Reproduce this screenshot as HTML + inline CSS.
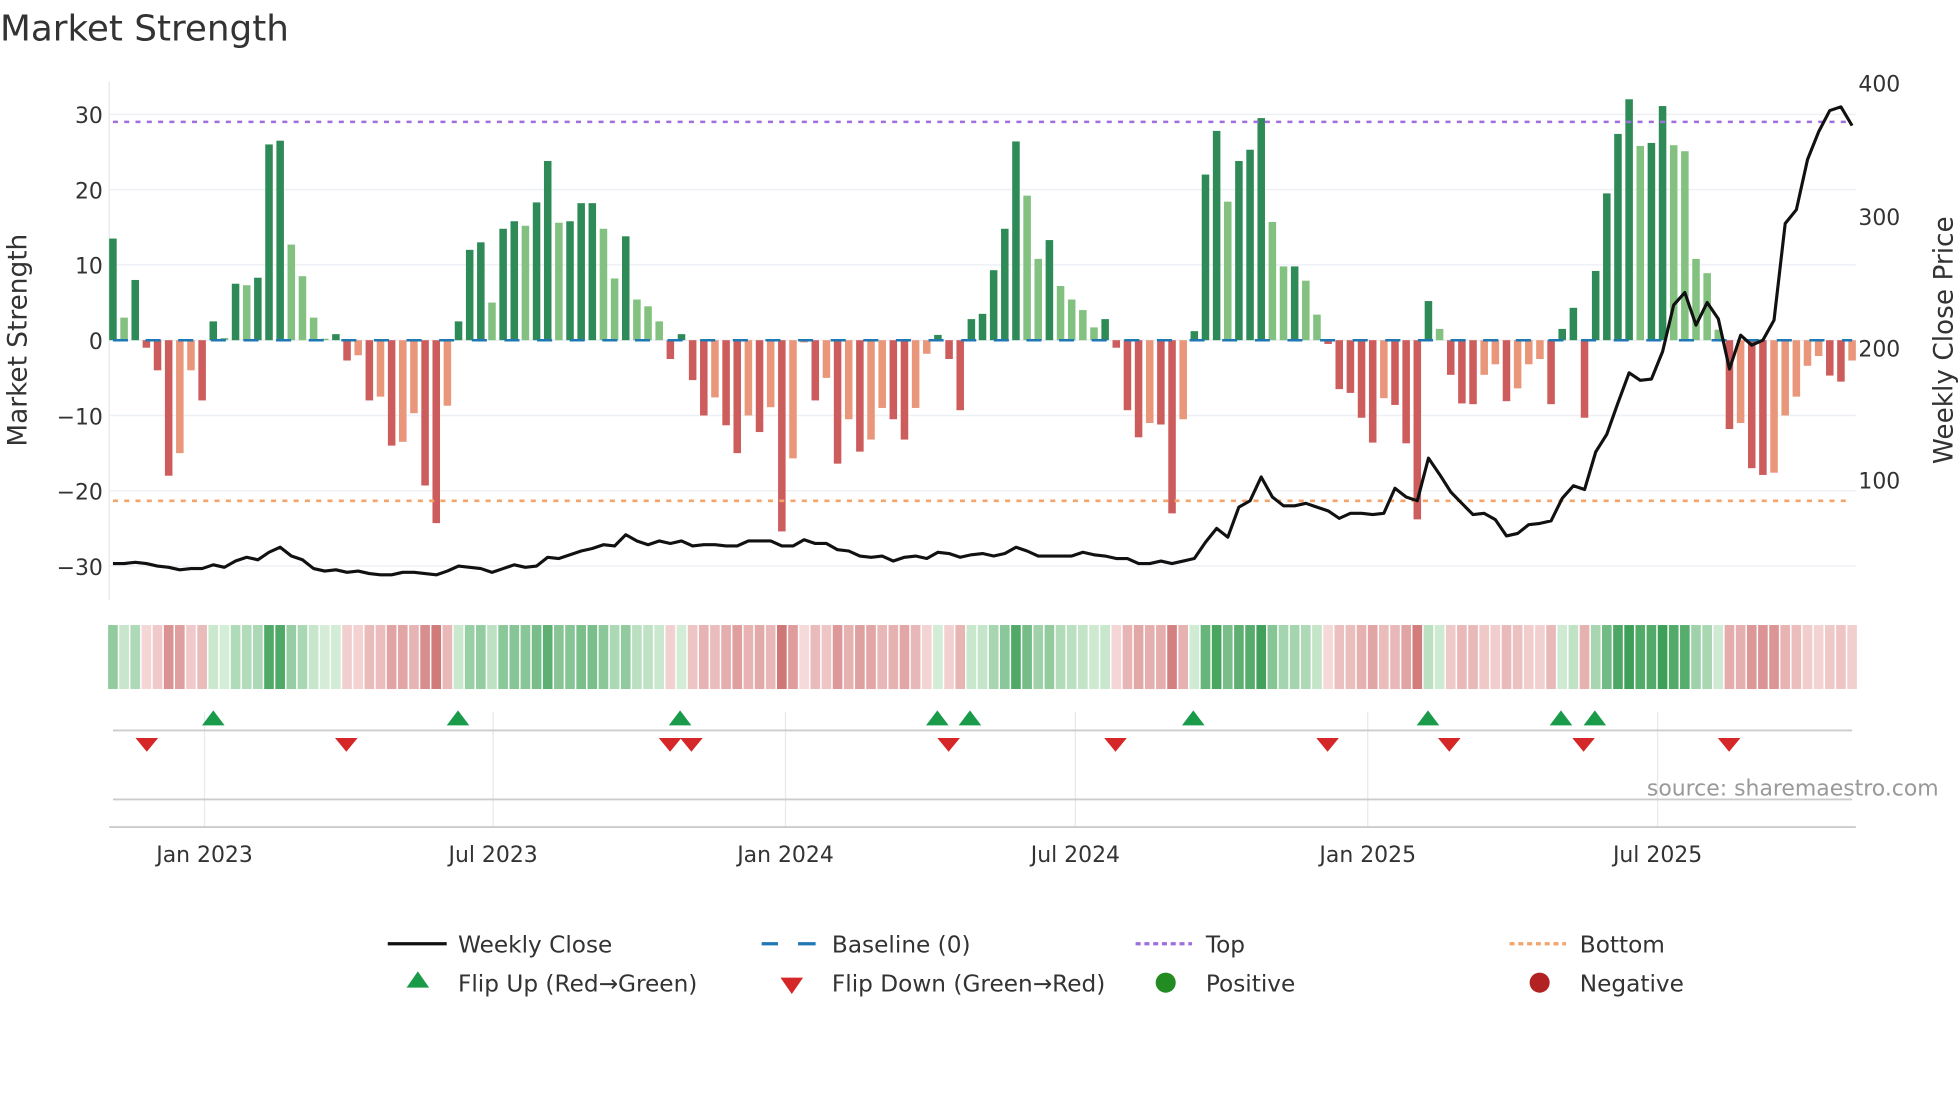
<!DOCTYPE html>
<html><head><meta charset="utf-8">
<style>
html,body{margin:0;padding:0;background:#fff;overflow:hidden}
svg{display:block}
text{font-family:"DejaVu Sans","Liberation Sans",sans-serif;fill:#333}
</style></head>
<body>
<svg id="s" xmlns="http://www.w3.org/2000/svg" width="1960" height="1102" viewBox="0 0 1562 878">
<text x="0" y="32" font-size="28.5">Market Strength</text>
<g id="grid"></g>
<g id="bars"></g>
<g id="fg"></g>
<text x="1545" y="634" font-size="17.5" text-anchor="end" style="fill:#999">source: sharemaestro.com</text>
<text transform="translate(21,271) rotate(-90)" font-size="21" text-anchor="middle">Market Strength</text>
<text transform="translate(1556,271) rotate(-90)" font-size="21" text-anchor="middle">Weekly Close Price</text>
<g font-size="17.5">
<text x="82" y="98" text-anchor="end">30</text>
<text x="82" y="158" text-anchor="end">20</text>
<text x="82" y="218" text-anchor="end">10</text>
<text x="82" y="278" text-anchor="end">0</text>
<text x="82" y="338" text-anchor="end">−10</text>
<text x="82" y="398" text-anchor="end">−20</text>
<text x="82" y="458" text-anchor="end">−30</text>
<text x="1481" y="73">400</text>
<text x="1481" y="179">300</text>
<text x="1481" y="284">200</text>
<text x="1481" y="389">100</text>
<text x="163" y="687" text-anchor="middle">Jan 2023</text>
<text x="393" y="687" text-anchor="middle">Jul 2023</text>
<text x="626" y="687" text-anchor="middle">Jan 2024</text>
<text x="857" y="687" text-anchor="middle">Jul 2024</text>
<text x="1090" y="687" text-anchor="middle">Jan 2025</text>
<text x="1321" y="687" text-anchor="middle">Jul 2025</text>
</g>
<g font-size="18.5">
<line x1="309" y1="752" x2="356" y2="752" stroke="#111" stroke-width="2.5"/>
<text x="365" y="759">Weekly Close</text>
<line x1="607" y1="752" x2="620" y2="752" stroke="#1f77b4" stroke-width="2.5"/>
<line x1="636" y1="752" x2="650" y2="752" stroke="#1f77b4" stroke-width="2.5"/>
<text x="663" y="759">Baseline (0)</text>
<line x1="905" y1="752" x2="950" y2="752" stroke="#9f6fe0" stroke-width="2.5" stroke-dasharray="4,3"/>
<text x="961" y="759">Top</text>
<line x1="1203" y1="752" x2="1248" y2="752" stroke="#f4a36a" stroke-width="2.5" stroke-dasharray="4,3"/>
<text x="1259" y="759">Bottom</text>
<polygon points="333,774 324,787 342,787" fill="#1a9b4a"/>
<text x="365" y="790">Flip Up (Red→Green)</text>
<polygon points="622,779 640,779 631,792" fill="#d62728"/>
<text x="663" y="790">Flip Down (Green→Red)</text>
<circle cx="929" cy="783" r="8" fill="#228b22"/>
<text x="961" y="790">Positive</text>
<circle cx="1227" cy="783" r="8" fill="#b22222"/>
<text x="1259" y="790">Negative</text>
</g>
</svg>
<script>
var NS="http://www.w3.org/2000/svg";
function el(p,t,a){var e=document.createElementNS(NS,t);for(var k in a)e.setAttribute(k,a[k]);p.appendChild(e);return e;}
var G=document.getElementById('grid'),B=document.getElementById('bars'),F=document.getElementById('fg');
for(var v=30;v>=-30;v-=10){var y=271-v*6;el(G,'line',{x1:87,x2:1479,y1:y,y2:y,stroke:'#edf0f5','stroke-width':1.2});}
el(G,'line',{x1:87,x2:87,y1:65,y2:478,stroke:'#e8ebf0','stroke-width':1.2});
[163,393,626,857,1090,1321].forEach(function(x){el(G,'line',{x1:x,x2:x,y1:567,y2:659,stroke:'#e6e9ef','stroke-width':1});});
el(G,'line',{x1:90,x2:1476,y1:582,y2:582,stroke:'#ccc','stroke-width':1.5});
el(G,'line',{x1:90,x2:1476,y1:637,y2:637,stroke:'#ccc','stroke-width':1.5});
el(G,'line',{x1:87,x2:1479,y1:659,y2:659,stroke:'#ccc','stroke-width':1.5});
var d="13.5D 3L 8D -1R -4R -18R -15O -4O -8R 2.5D 0.3L 7.5D 7.3L 8.3D 26D 26.5D 12.7L 8.5L 3L 0.2L 0.8D -2.7R -2O -8R -7.5O -14R -13.5O -9.7O -19.3R -24.3R -8.7O 2.5D 12D 13D 5L 14.8D 15.8D 15.2L 18.3D 23.8D 15.6L 15.8D 18.2D 18.2D 14.8L 8.2L 13.8D 5.4L 4.5L 2.5L -2.5R 0.8D -5.3R -10R -7.6O -11.3R -15R -10O -12.2R -8.9O -25.4R -15.7O -0.3O -8R -5O -16.4R -10.5O -14.8R -13.2O -9O -10.5R -13.2R -9O -1.8O 0.7D -2.5R -9.3R 2.8D 3.5D 9.3D 14.8D 26.4D 19.2L 10.8L 13.3D 7.2L 5.4L 4L 1.7L 2.8D -1R -9.3R -12.9R -11O -11.2R -23R -10.5O 1.2D 22D 27.8D 18.4L 23.8D 25.3D 29.5D 15.7L 9.8L 9.8D 7.9L 3.4L -0.5R -6.5R -7R -10.3R -13.6R -7.7O -8.6R -13.7R -23.8R 5.2D 1.5L -4.6R -8.4R -8.5R -4.6O -3.2O -8.1R -6.4O -3.2O -2.5O -8.5R 1.5D 4.3D -10.3R 9.2D 19.5D 27.4D 32D 25.8L 26.2D 31.1D 25.9L 25.1L 10.8L 8.9L 1.4L -11.8R -11O -17R -17.9R -17.6O -10O -7.5O -3.4O -2.1O -4.7R -5.5R -2.7O".split(' ');
var n=d.length,x0=90,x1=1476,st=(x1-x0)/(n-1);
var col={D:'#2e8b57',L:'#82c17f',R:'#cd5c5c',O:'#e9967a'};
function mix(a,b,t){return 'rgb('+[0,1,2].map(function(i){return Math.round(a[i]+(b[i]-a[i])*t)}).join(',')+')';}
d.forEach(function(s,i){
 var v=parseFloat(s),c=s.slice(-1),x=x0+i*st,y0=271,y=271-v*6;
 el(B,'rect',{x:x-3,y:Math.min(y,y0),width:6,height:Math.max(Math.abs(y-y0),0.8),fill:col[c]});
 var t=Math.min(Math.abs(v)/30,1);
 var f=v>=0?mix([214,238,216],[62,160,88],t):mix([246,218,218],[200,100,100],t);
 el(B,'rect',{x:x-st/2+0.6,y:498,width:st-1.2,height:51,fill:f});
});
el(F,'line',{x1:90,x2:1476,y1:271,y2:271,stroke:'#1f77b4','stroke-width':2,'stroke-dasharray':'12,14'});
el(F,'line',{x1:90,x2:1476,y1:97,y2:97,stroke:'#9f6fe0','stroke-width':2,'stroke-dasharray':'4,5'});
el(F,'line',{x1:90,x2:1476,y1:399,y2:399,stroke:'#f4a36a','stroke-width':2,'stroke-dasharray':'4,5'});
var py=[449,449,448,449,451,452,454,453,453,450,452,447,444,446,440,436,443,446,453,455,454,456,455,457,458,458,456,456,457,458,455,451,452,453,456,453,450,452,451,444,445,442,439,437,434,435,426,431,434,431,433,431,435,434,434,435,435,431,431,431,435,435,430,433,433,438,439,443,444,443,447,444,443,445,440,441,444,442,441,443,441,436,439,443,443,443,443,440,442,443,445,445,449,449,447,449,447,445,432,421,428,404,399,380,396,403,403,401,404,407,413,409,409,410,409,389,396,399,365,378,392,401,410,409,414,427,425,418,417,415,397,387,390,360,346,321,297,303,302,280,243,233,259,241,254,294,267,275,271,255,178,167,127,105,88,85,100];
var pts=py.map(function(y,i){return (x0+i*(x1-x0)/(py.length-1)).toFixed(1)+','+y;}).join(' ');
el(F,'polyline',{points:pts,fill:'none',stroke:'#111','stroke-width':2.5,'stroke-linejoin':'round'});
[170,365,542,747,773,951,1138,1244,1271].forEach(function(x){el(F,'polygon',{points:(x)+',566 '+(x-9)+',578 '+(x+9)+',578',fill:'#1a9b4a'});});
[117,276,534,551,756,889,1058,1155,1262,1378].forEach(function(x){el(F,'polygon',{points:(x-9)+',588 '+(x+9)+',588 '+x+',599',fill:'#d62728'});});
</script>
</body></html>
